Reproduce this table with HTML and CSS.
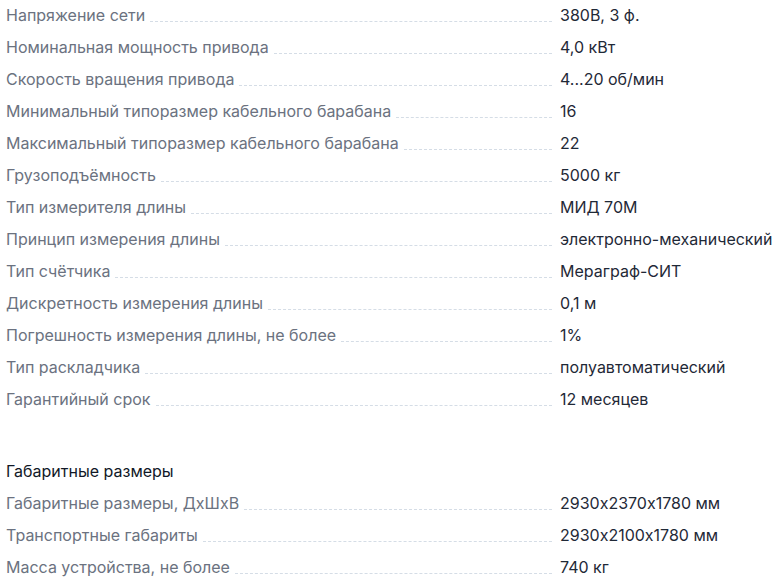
FILE: index.html
```html
<!DOCTYPE html>
<html lang="ru">
<head>
<meta charset="utf-8">
<link rel="stylesheet" href="styles.css">
</head>
<body>
<div class="specs">
  <div class="group">
    <div class="row"><span class="label">Напряжение сети</span><span class="fill"></span><span class="value">380В, 3 ф.</span></div>
    <div class="row"><span class="label">Номинальная мощность привода</span><span class="fill"></span><span class="value">4,0 кВт</span></div>
    <div class="row"><span class="label">Скорость вращения привода</span><span class="fill"></span><span class="value">4...20 об/мин</span></div>
    <div class="row"><span class="label">Минимальный типоразмер кабельного барабана</span><span class="fill"></span><span class="value">16</span></div>
    <div class="row"><span class="label">Максимальный типоразмер кабельного барабана</span><span class="fill"></span><span class="value">22</span></div>
    <div class="row"><span class="label">Грузоподъёмность</span><span class="fill"></span><span class="value">5000 кг</span></div>
    <div class="row"><span class="label">Тип измерителя длины</span><span class="fill"></span><span class="value">МИД 70М</span></div>
    <div class="row"><span class="label">Принцип измерения длины</span><span class="fill"></span><span class="value">электронно-механический</span></div>
    <div class="row"><span class="label">Тип счётчика</span><span class="fill"></span><span class="value">Мераграф-СИТ</span></div>
    <div class="row"><span class="label">Дискретность измерения длины</span><span class="fill"></span><span class="value">0,1 м</span></div>
    <div class="row"><span class="label">Погрешность измерения длины, не более</span><span class="fill"></span><span class="value">1%</span></div>
    <div class="row"><span class="label">Тип раскладчика</span><span class="fill"></span><span class="value">полуавтоматический</span></div>
    <div class="row"><span class="label">Гарантийный срок</span><span class="fill"></span><span class="value">12 месяцев</span></div>
  </div>
  <div class="group">
    <div class="group-title">Габаритные размеры</div>
    <div class="row"><span class="label">Габаритные размеры, ДхШхВ</span><span class="fill"></span><span class="value">2930x2370x1780 мм</span></div>
    <div class="row"><span class="label">Транспортные габариты</span><span class="fill"></span><span class="value">2930x2100x1780 мм</span></div>
    <div class="row"><span class="label">Масса устройства, не более</span><span class="fill"></span><span class="value">740 кг</span></div>
  </div>
</div>
</body>
</html>
```

FILE: styles.css
```css
html, body {
  margin: 0;
  padding: 0;
  background: #ffffff;
}
body {
  font-family: Inter, "Noto Sans", sans-serif;
  font-size: 16px;
  font-feature-settings: "calt" 0;
  overflow: hidden;
}
.specs {
  padding-left: 6px;
  display: flex;
  flex-direction: column;
  gap: 40px;
}
.row {
  display: flex;
  height: 32px;
  line-height: 30px;
}
.label {
  color: #6b7280;
  white-space: nowrap;
}
.fill {
  flex: 1;
  height: 21px;
  margin: 0 8px 0 5px;
  border-bottom: 1px dashed #d5dde6;
}
.value {
  width: 220px;
  flex: none;
  color: #1f2937;
  white-space: nowrap;
}
.group-title {
  color: #111827;
  height: 32px;
  line-height: 30px;
}
```
